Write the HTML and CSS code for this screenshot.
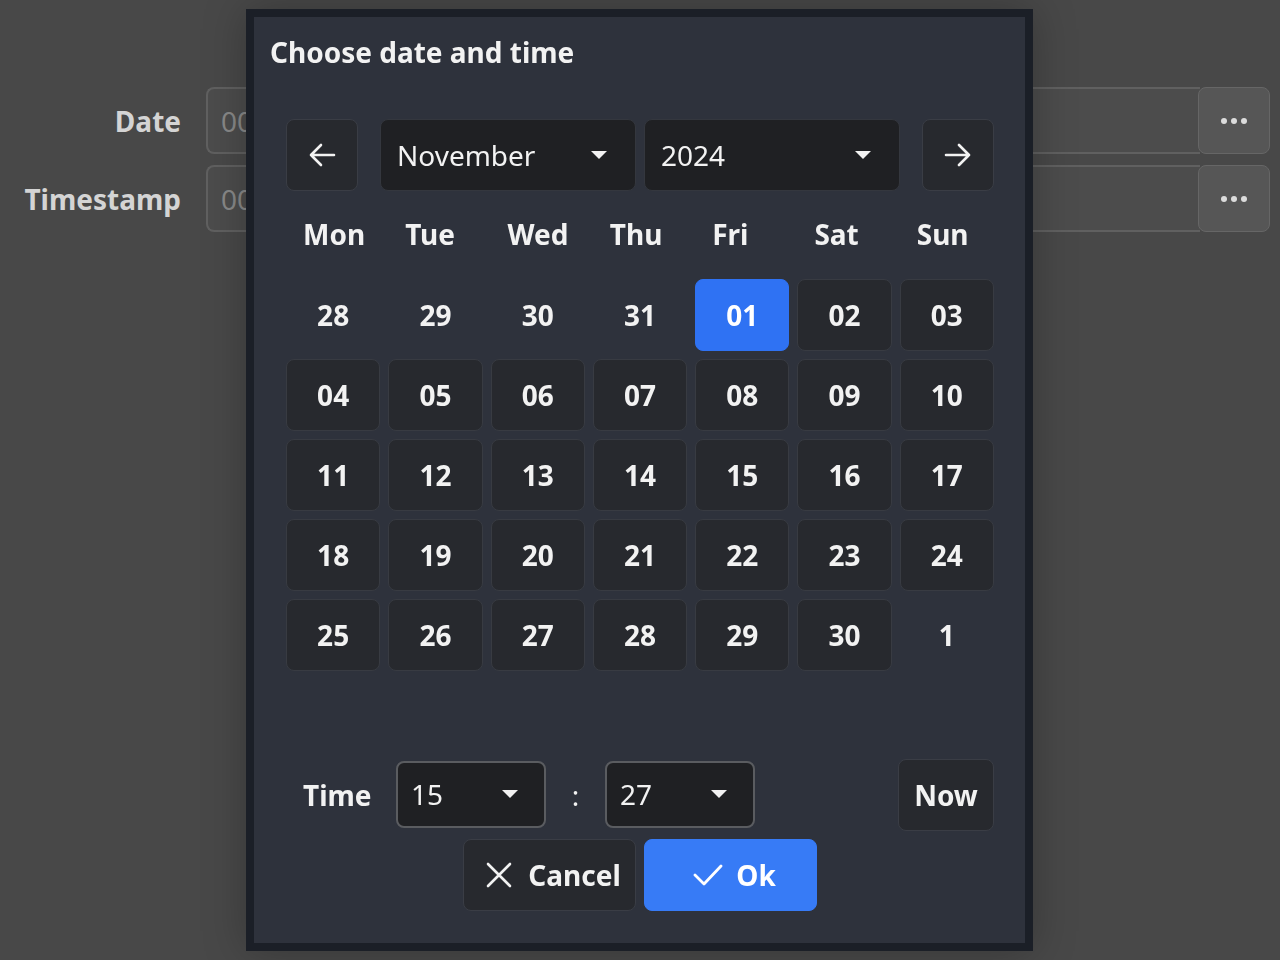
FILE: index.html
```html
<!DOCTYPE html>
<html lang="en">
<head>
<meta charset="utf-8">
<title>Choose date and time</title>
<link rel="stylesheet" href="styles.css">
</head>
<body>
<main class="form">
  <div class="form-row">
    <label class="form-label">Date</label>
    <div class="field">
      <div class="field-input">00</div>
      <button class="field-btn"><span class="dots"><i></i><i></i><i></i></span></button>
    </div>
  </div>
  <div class="form-row">
    <label class="form-label">Timestamp</label>
    <div class="field">
      <div class="field-input">00</div>
      <button class="field-btn"><span class="dots"><i></i><i></i><i></i></span></button>
    </div>
  </div>
</main>

<section class="dialog">
  <h1 class="dialog-title">Choose date and time</h1>
  <div class="dialog-body">
    <div class="nav">
      <button class="nav-btn" aria-label="Previous month">
        <svg width="30" height="30" viewBox="0 0 30 30"><path d="M27 15H4M14 5L4 15l10 10" fill="none" stroke="#f2f2f2" stroke-width="2.6" stroke-linecap="round" stroke-linejoin="round"/></svg>
      </button>
      <div class="select select-wide"><span>November</span><span class="caret"></span></div>
      <div class="select select-wide"><span>2024</span><span class="caret"></span></div>
      <button class="nav-btn" aria-label="Next month">
        <svg width="30" height="30" viewBox="0 0 30 30"><path d="M3 15h23M16 5l10 10-10 10" fill="none" stroke="#f2f2f2" stroke-width="2.6" stroke-linecap="round" stroke-linejoin="round"/></svg>
      </button>
    </div>

    <div class="weekdays">
      <div>Mon</div><div>Tue</div><div>Wed</div><div>Thu</div><div>Fri</div><div>Sat</div><div>Sun</div>
    </div>

    <div class="days">
      <div class="day other">28</div><div class="day other">29</div><div class="day other">30</div><div class="day other">31</div><div class="day selected">01</div><div class="day">02</div><div class="day">03</div>
      <div class="day">04</div><div class="day">05</div><div class="day">06</div><div class="day">07</div><div class="day">08</div><div class="day">09</div><div class="day">10</div>
      <div class="day">11</div><div class="day">12</div><div class="day">13</div><div class="day">14</div><div class="day">15</div><div class="day">16</div><div class="day">17</div>
      <div class="day">18</div><div class="day">19</div><div class="day">20</div><div class="day">21</div><div class="day">22</div><div class="day">23</div><div class="day">24</div>
      <div class="day">25</div><div class="day">26</div><div class="day">27</div><div class="day">28</div><div class="day">29</div><div class="day">30</div><div class="day other">1</div>
    </div>

    <div class="time-row">
      <span class="time-label">Time</span>
      <div class="select select-time"><span>15</span><span class="caret"></span></div>
      <span class="colon">:</span>
      <div class="select select-time"><span>27</span><span class="caret"></span></div>
      <button class="now-btn">Now</button>
    </div>

    <div class="actions">
      <button class="action cancel">
        <svg width="26" height="26" viewBox="0 0 26 26"><path d="M2 2l22 22M24 2L2 24" fill="none" stroke="#f2f2f2" stroke-width="2.6" stroke-linecap="round"/></svg>
        <span>Cancel</span>
      </button>
      <button class="action ok">
        <svg width="30" height="24" viewBox="0 0 30 24"><path d="M2 12l9 9L28 3" fill="none" stroke="#ffffff" stroke-width="2.8" stroke-linecap="round" stroke-linejoin="round"/></svg>
        <span>Ok</span>
      </button>
    </div>
  </div>
</section>
</body>
</html>
```

FILE: styles.css
```css
* { box-sizing: border-box; }

html, body {
  margin: 0;
  height: 100%;
}

body {
  background: #484848;
  font-family: "Noto Sans", "Open Sans", sans-serif;
  color: #f2f2f2;
  overflow: hidden;
}

button {
  font-family: inherit;
  color: inherit;
  cursor: pointer;
}

/* Background form */
.form {
  padding-top: 87px;
  display: flex;
  flex-direction: column;
  gap: 11px;
}

.form-row {
  display: flex;
  align-items: center;
}

.form-label {
  width: 181px;
  text-align: right;
  font-size: 28px;
  font-weight: 700;
  color: #d4d4d4;
  margin-right: 25px;
}

.field {
  display: flex;
  width: 1064px;
  height: 67px;
}

.field-input {
  flex: 1;
  border: 2px solid #606060;
  border-right: none;
  border-radius: 8px 0 0 8px;
  background: #4c4c4c;
  padding-left: 13px;
  font-size: 28px;
  color: #888;
  display: flex;
  align-items: center;
}

.field-btn {
  width: 72px;
  border: 1px solid #666;
  border-radius: 8px;
  background: #565656;
  margin-left: -2px;
  display: flex;
  align-items: center;
  justify-content: center;
  padding: 0;
}

.dots {
  display: flex;
  gap: 4px;
}

.dots i {
  width: 6px;
  height: 6px;
  border-radius: 50%;
  background: #dcdcdc;
}

/* Dialog */
.dialog {
  position: fixed;
  left: 246px;
  top: 9px;
  width: 787px;
  height: 942px;
  border: 8px solid #1b1f27;
  background: #2e323c;
  box-shadow: 0 0 40px rgba(0, 0, 0, 0.25);
  display: flex;
  flex-direction: column;
}

.dialog-title {
  margin: 0;
  padding: 16px 0 0 16px;
  font-size: 28px;
  line-height: 38px;
  font-weight: 700;
  color: #f2f2f2;
}

.dialog-body {
  padding: 48px 31px 32px 32px;
  display: flex;
  flex-direction: column;
}

.nav {
  display: flex;
  align-items: center;
  height: 72px;
}

.nav-btn {
  width: 72px;
  height: 72px;
  border: 1px solid #3a3d45;
  border-radius: 8px;
  background: #27292e;
  display: flex;
  align-items: center;
  justify-content: center;
  padding: 0;
}

.select {
  display: flex;
  align-items: center;
  justify-content: space-between;
  background: #1f2023;
  border-radius: 8px;
  font-size: 28px;
  color: #f2f2f2;
}

.select-wide {
  width: 256px;
  height: 72px;
  border: 1px solid #34373e;
  padding: 0 28px 0 16px;
}

.nav .select-wide:first-of-type {
  margin-left: 22px;
  margin-right: 8px;
}

.nav .select-wide + .nav-btn {
  margin-left: 22px;
}

.caret {
  width: 0;
  height: 0;
  border-left: 8px solid transparent;
  border-right: 8px solid transparent;
  border-top: 8px solid #f2f2f2;
}

.weekdays {
  margin-top: 24px;
  display: grid;
  grid-template-columns: repeat(7, 1fr);
  column-gap: 8px;
  font-size: 28px;
  line-height: 38px;
  font-weight: 700;
}

.weekdays div {
  padding-left: 17px;
}

.days {
  margin-top: 26px;
  display: grid;
  grid-template-columns: repeat(7, 1fr);
  grid-auto-rows: 72px;
  gap: 8px;
}

.day {
  display: flex;
  align-items: center;
  justify-content: center;
  background: #27292e;
  border: 1px solid #383b42;
  border-radius: 8px;
  font-size: 28px;
  font-weight: 700;
  color: #f2f2f2;
}

.day.other {
  background: transparent;
  border-color: transparent;
}

.day.selected {
  background: #2f72f3;
  border-color: #2f72f3;
  color: #fff;
}

.time-row {
  margin-top: 88px;
  display: flex;
  align-items: center;
  height: 72px;
}

.time-label {
  width: 110px;
  padding-left: 17px;
  font-size: 28px;
  font-weight: 700;
}

.select-time {
  width: 150px;
  height: 67px;
  margin-top: -2px;
  border: 2px solid #5a5c60;
  padding: 0 26px 0 13px;
}

.colon {
  width: 59px;
  text-align: center;
  font-size: 28px;
}

.now-btn {
  margin-left: auto;
  width: 96px;
  height: 72px;
  border: 1px solid #3a3d45;
  border-radius: 8px;
  background: #27292e;
  font-size: 28px;
  font-weight: 700;
  padding: 0;
}

.actions {
  margin-top: 8px;
  display: flex;
  justify-content: center;
  gap: 8px;
}

.action {
  width: 173px;
  height: 72px;
  border-radius: 8px;
  display: flex;
  align-items: center;
  justify-content: center;
  gap: 16px;
  font-size: 28px;
  font-weight: 700;
  padding: 0;
}

.cancel {
  background: #27292e;
  border: 1px solid #3a3d45;
  padding-left: 8px;
}

.ok {
  background: #377bf6;
  border: 1px solid #377bf6;
  color: #fff;
  gap: 13px;
  padding-left: 8px;
}
```
